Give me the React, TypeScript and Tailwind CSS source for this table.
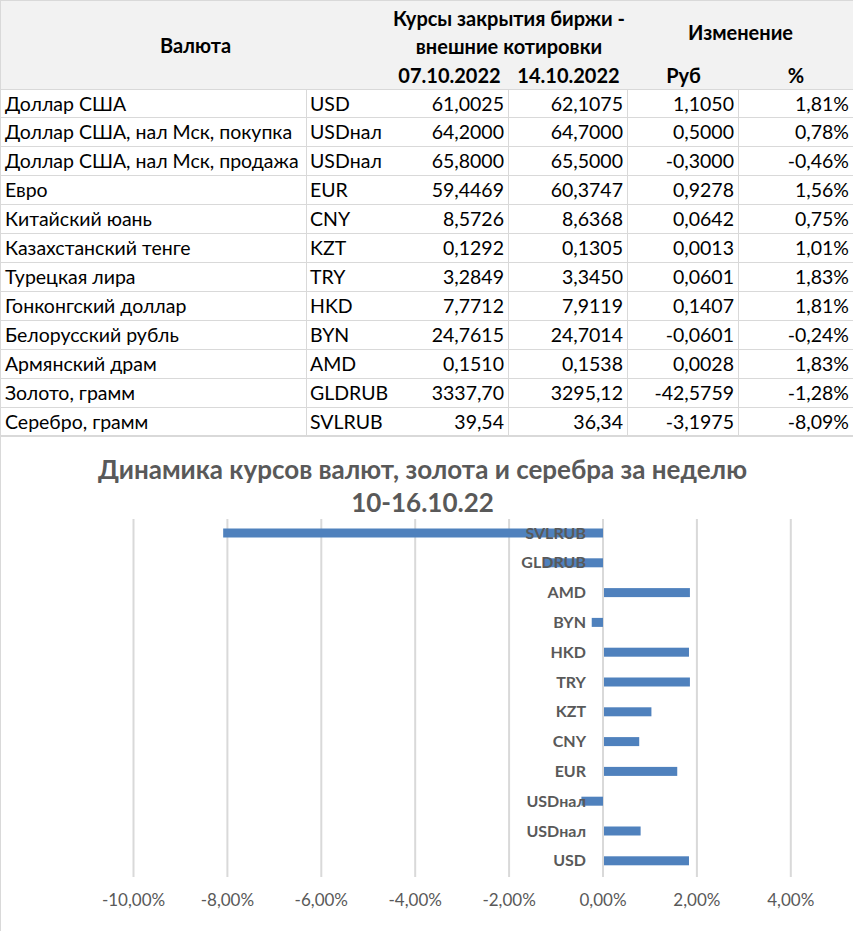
import React from 'react';

const rows = [
    ['Доллар США', 'USD', '61,0025', '62,1075', '1,1050', '1,81%'],
    ['Доллар США, нал Мск, покупка', 'USDнал', '64,2000', '64,7000', '0,5000', '0,78%'],
    ['Доллар США, нал Мск, продажа', 'USDнал', '65,8000', '65,5000', '-0,3000', '-0,46%'],
    ['Евро', 'EUR', '59,4469', '60,3747', '0,9278', '1,56%'],
    ['Китайский юань', 'CNY', '8,5726', '8,6368', '0,0642', '0,75%'],
    ['Казахстанский тенге', 'KZT', '0,1292', '0,1305', '0,0013', '1,01%'],
    ['Турецкая лира', 'TRY', '3,2849', '3,3450', '0,0601', '1,83%'],
    ['Гонконгский доллар', 'HKD', '7,7712', '7,9119', '0,1407', '1,81%'],
    ['Белорусский рубль', 'BYN', '24,7615', '24,7014', '-0,0601', '-0,24%'],
    ['Армянский драм', 'AMD', '0,1510', '0,1538', '0,0028', '1,83%'],
    ['Золото, грамм', 'GLDRUB', '3337,70', '3295,12', '-42,5759', '-1,28%'],
    ['Серебро, грамм', 'SVLRUB', '39,54', '36,34', '-3,1975', '-8,09%'],
];

// chart goes top to bottom, same as excel's reversed category axis
const bars: [string, number][] = [
    ['SVLRUB', -8.09],
    ['GLDRUB', -1.28],
    ['AMD', 1.83],
    ['BYN', -0.24],
    ['HKD', 1.81],
    ['TRY', 1.83],
    ['KZT', 1.01],
    ['CNY', 0.75],
    ['EUR', 1.56],
    ['USDнал', -0.46],
    ['USDнал', 0.78],
    ['USD', 1.81],
];

const ZERO = 602;
const PX = 46.95;
const ticks = [-10, -8, -6, -4, -2, 0, 2, 4];

const fmt = (t: number) => `${t.toFixed(2).replace('.', ',')}%`;

const Chart = () => {
    return (
        <svg width={853} height={411} className="block">
            {ticks.map((t) => (
                <line key={t} x1={ZERO + t * PX} x2={ZERO + t * PX} y1={0} y2={358} stroke="#d9d9d9" strokeWidth={2} />
            ))}
            {bars.map(([name, v], i) => {
                const cy = 14 + i * 29.8;
                const x = v < 0 ? ZERO + v * PX : ZERO + 1;
                return (
                    <g key={i}>
                        <rect x={x} y={cy - 4.5} width={Math.abs(v) * PX} height={9} fill="#4f81bd" />
                        <text x={585} y={cy + 5.5} textAnchor="end" fontSize={16} fontWeight={700} fill="#595959">
                            {name}
                        </text>
                    </g>
                );
            })}
            {ticks.map((t) => (
                <text key={t} x={ZERO + t * PX} y={387} textAnchor="middle" fontSize={17} fill="#595959">
                    {fmt(t)}
                </text>
            ))}
        </svg>
    );
};

const App = () => {
    return (
        <div className="w-[853px] h-[931px] bg-white overflow-hidden border-l border-[#d9d9d9] text-black font-['Lato','Noto_Sans',sans-serif]">
            <div className="border-t border-[#d9d9d9]">
                <div className="grid grid-cols-[306px_83px_119px_119px_111px_114px] grid-rows-[31px_28px_29px] bg-[#f2f2f2] font-bold text-[20px]">
                    <div className="col-span-2 row-span-3 flex items-center justify-center">Валюта</div>
                    <div className="col-span-2 row-span-2 flex flex-col items-center justify-center leading-[28px] pt-[3px]">
                        <span>Курсы закрытия биржи -</span>
                        <span>внешние котировки</span>
                    </div>
                    <div className="col-span-2 row-span-2 flex items-center justify-center pt-[3px]">Изменение</div>
                    <div className="flex items-center justify-center">07.10.2022</div>
                    <div className="flex items-center justify-center">14.10.2022</div>
                    <div className="flex items-center justify-center">Руб</div>
                    <div className="flex items-center justify-center">%</div>
                </div>
                {rows.map((r, i) => (
                    <div
                        key={i}
                        className={`grid grid-cols-[306px_83px_119px_119px_111px_114px] h-[29px] text-[19.5px] leading-[28px] border-[#d9d9d9] ${i === rows.length - 1 ? 'border-b-2' : 'border-b'} ${i === 0 ? 'border-t' : ''}`}
                    >
                        <div className="pl-[4px] border-r border-[#d9d9d9] whitespace-nowrap">{r[0]}</div>
                        <div className="pl-[3px]">{r[1]}</div>
                        <div className="pr-[4px] text-right border-r border-[#d9d9d9]">{r[2]}</div>
                        <div className="pr-[4px] text-right border-r border-[#d9d9d9]">{r[3]}</div>
                        <div className="pr-[4px] text-right border-r border-[#d9d9d9]">{r[4]}</div>
                        <div className="pr-[4px] text-right">{r[5]}</div>
                    </div>
                ))}
            </div>
            <div className="flex flex-col items-center pr-[9px] pt-[16px] text-[26px] font-bold leading-[33px] text-[#595959]">
                <span>Динамика курсов валют, золота и серебра за неделю</span>
                <span>10-16.10.22</span>
            </div>
            <Chart />
        </div>
    );
};

export default App;
